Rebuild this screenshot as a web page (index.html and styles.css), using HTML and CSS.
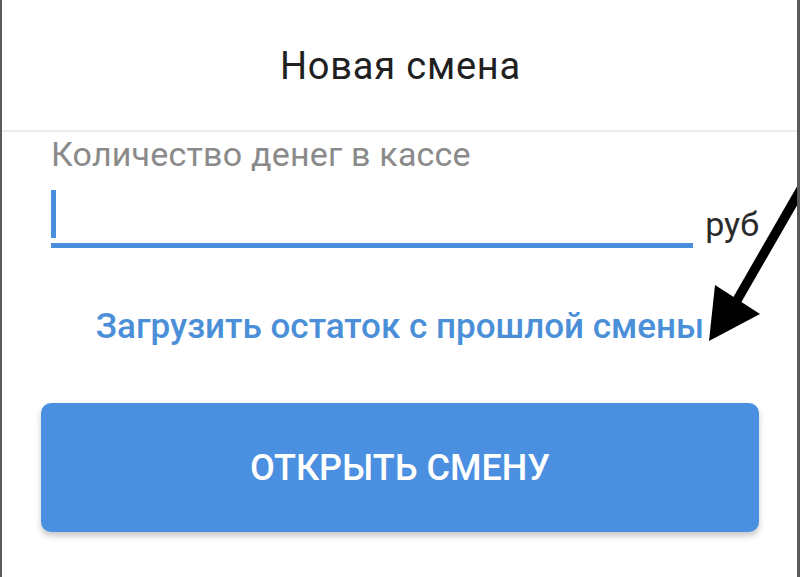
FILE: index.html
```html
<!DOCTYPE html>
<html lang="ru">
<head>
<meta charset="utf-8">
<link rel="stylesheet" href="styles.css">
</head>
<body>
<div class="frame">
  <header class="header"><h1 class="title">Новая смена</h1></header>
  <main class="content">
    <div class="label">Количество денег в кассе</div>
    <div class="field-row">
      <div class="field"><span class="cursor"></span></div>
      <span class="unit">руб</span>
    </div>
    <div class="link-row"><a class="link">Загрузить остаток с прошлой смены</a></div>
    <button class="btn">ОТКРЫТЬ СМЕНУ</button>
  </main>
  <svg class="arrow" width="110" height="170" viewBox="690 180 110 170">
    <line x1="803" y1="182" x2="734" y2="302" stroke="#000" stroke-width="9.5"/>
    <polygon points="707,341 713,285 758,314" fill="#000"/>
  </svg>
</div>
</body>
</html>
```
FILE: styles.css
```css
* { box-sizing: border-box; }
html, body { margin: 0; padding: 0; background: #fff; }
body { font-family: Roboto, "Noto Sans", sans-serif; }
.frame {
  position: relative;
  width: 800px;
  height: 577px;
  border-left: 2px solid #5a5a5a;
  border-right: 3px solid #5a5a5a;
  overflow: hidden;
}
.header {
  height: 132px;
  border-bottom: 2px solid #ebebeb;
  display: flex;
  align-items: center;
  justify-content: center;
}
.title {
  margin: 0;
  font-weight: 400;
  font-size: 38px;
  letter-spacing: 0.8px;
  color: #202020;
  padding-top: 2px;
  padding-left: 2px;
}
.content { padding: 0 38px 0 39px; }
.label {
  margin-top: 2px;
  padding-left: 10px;
  font-size: 34px;
  letter-spacing: 0.2px;
  color: #8a8a8a;
  line-height: 40px;
}
.field-row { display: flex; align-items: flex-end; margin-top: 14px; }
.field {
  width: 643px;
  margin-left: 10px;
  height: 60px;
  border-bottom: 5px solid #4a8fdc;
  display: flex;
  align-items: flex-end;
  padding-bottom: 5px;
}
.cursor { width: 5px; height: 48px; background: #4a8fdc; }
.unit { font-size: 34px; color: #2a2a2a; margin-left: 12px; line-height: 40px; padding-bottom: 4px; }
.link-row { text-align: center; margin-top: 58px; }
.link { font-size: 35px; font-weight: 500; color: #4a8fd8; }
.btn {
  display: block;
  width: 718px;
  height: 129px;
  margin-top: 56px;
  border: 0;
  border-radius: 10px;
  background: #4a8fe0;
  color: #fff;
  font-family: Roboto, sans-serif;
  font-weight: 500;
  font-size: 36px;
  box-shadow: 0 4px 6px rgba(0,0,0,0.22);
}
.arrow { position: absolute; left: 690px; top: 180px; }
```
